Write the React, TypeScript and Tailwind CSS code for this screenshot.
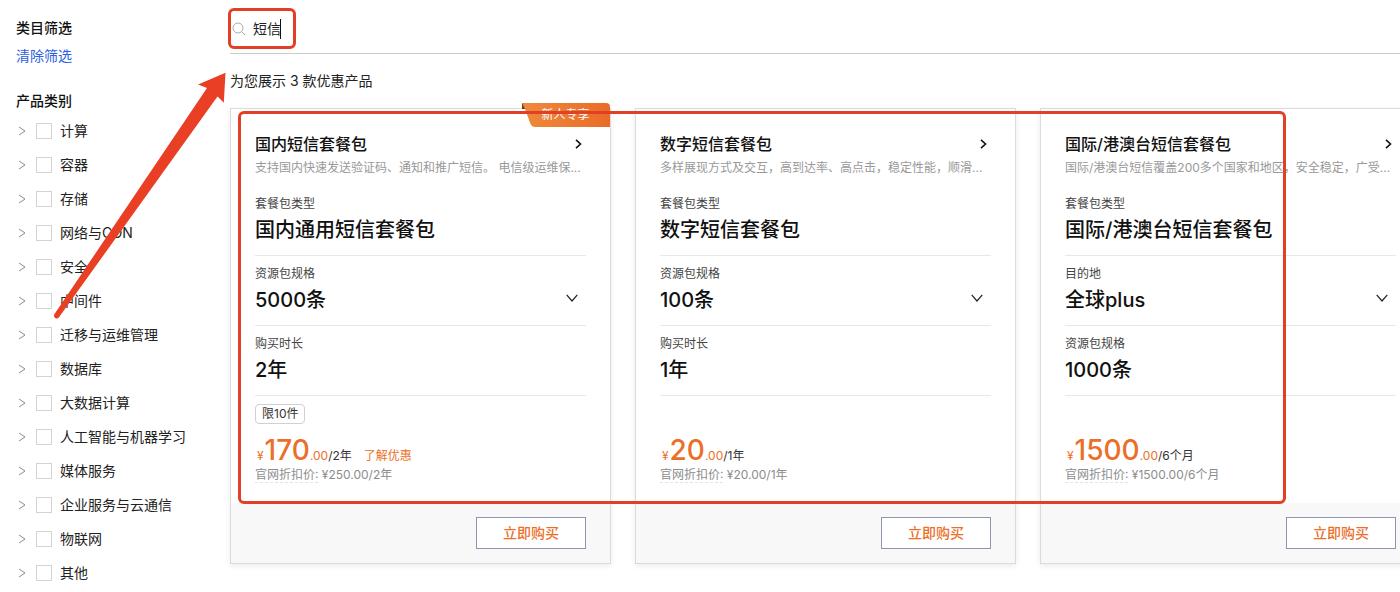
import { useState } from "react";

const categories = [
  "计算",
  "容器",
  "存储",
  "网络与CDN",
  "安全",
  "中间件",
  "迁移与运维管理",
  "数据库",
  "大数据计算",
  "人工智能与机器学习",
  "媒体服务",
  "企业服务与云通信",
  "物联网",
  "其他",
];

type Field = { label: string; value: string; options?: string[] };

type Product = {
  title: string;
  desc: string;
  ribbon?: string;
  fields: Field[];
  limit?: string;
  price: string;
  unit: string;
  more?: string;
  official: string;
};

const products: Product[] = [
  {
    title: "国内短信套餐包",
    desc: "支持国内快速发送验证码、通知和推广短信。 电信级运维保...",
    ribbon: "新人专享",
    fields: [
      { label: "套餐包类型", value: "国内通用短信套餐包" },
      { label: "资源包规格", value: "5000条", options: ["5000条"] },
      { label: "购买时长", value: "2年" },
    ],
    limit: "限10件",
    price: "170",
    unit: "/2年",
    more: "了解优惠",
    official: "¥250.00/2年",
  },
  {
    title: "数字短信套餐包",
    desc: "多样展现方式及交互，高到达率、高点击，稳定性能，顺滑...",
    fields: [
      { label: "套餐包类型", value: "数字短信套餐包" },
      { label: "资源包规格", value: "100条", options: ["100条"] },
      { label: "购买时长", value: "1年" },
    ],
    price: "20",
    unit: "/1年",
    official: "¥20.00/1年",
  },
  {
    title: "国际/港澳台短信套餐包",
    desc: "国际/港澳台短信覆盖200多个国家和地区，安全稳定，广受...",
    fields: [
      { label: "套餐包类型", value: "国际/港澳台短信套餐包" },
      { label: "目的地", value: "全球plus", options: ["全球plus"] },
      { label: "资源包规格", value: "1000条" },
    ],
    price: "1500",
    unit: "/6个月",
    official: "¥1500.00/6个月",
  },
];

function CategoryRow({ name }: { name: string }) {
  const [checked, setChecked] = useState(false);

  return (
    <li className="flex h-[34px] items-center">
      <button type="button" aria-label={`展开${name}`} className="mr-2 flex w-3 justify-center">
        <svg viewBox="0 0 8 10" className="h-2.5 w-2" fill="none" stroke="#8c8c8c" strokeWidth="1">
          <path d="M1 1l6 4-6 4" />
        </svg>
      </button>
      <label className="flex items-center gap-2 text-sm text-[#222]">
        <input
          type="checkbox"
          checked={checked}
          onChange={(e) => setChecked(e.target.checked)}
          className="h-4 w-4 appearance-none border border-[#d4d4d4] bg-white checked:bg-[#ec6f29]"
        />
        {name}
      </label>
    </li>
  );
}

function FieldRow({ field }: { field: Field }) {
  return (
    <div className="border-b border-[#e8e8e8] pt-2.5 pb-[11px]">
      {field.options ? (
        <label className="block">
          <span className="block text-xs leading-4 text-[#444]">{field.label}</span>
          <span className="relative mt-1 block">
            <select
              defaultValue={field.value}
              className="block h-7 w-full appearance-none bg-transparent text-xl leading-7 font-medium text-[#111] outline-none"
            >
              {field.options.map((o) => (
                <option key={o}>{o}</option>
              ))}
            </select>
            <svg
              viewBox="0 0 12 8"
              className="pointer-events-none absolute top-2 right-2 h-2 w-3"
              fill="none"
              stroke="#222"
              strokeWidth="1.2"
            >
              <path d="M.7 .8L6 7 11.3 .8" />
            </svg>
          </span>
        </label>
      ) : (
        <>
          <p className="text-xs leading-4 text-[#444]">{field.label}</p>
          <p className="mt-1 text-xl leading-7 font-medium text-[#111]">{field.value}</p>
        </>
      )}
    </div>
  );
}

function ProductCard({ product }: { product: Product }) {
  return (
    <article className="relative flex w-[381px] shrink-0 flex-col border border-[#d9dbdc] bg-white shadow-[0_2px_6px_rgba(0,0,0,0.08)]">
      {product.ribbon && (
        <div className="absolute -top-1.5 right-0 h-6 w-[89px] text-center text-xs leading-6 text-white">
          <svg viewBox="0 0 89 24" className="absolute inset-0 h-full w-full">
            <defs>
              <linearGradient id="ribbon" x1="0" y1="0" x2="1" y2="0">
                <stop offset="0" stopColor="#ee8a3c" />
                <stop offset="1" stopColor="#ea6b28" />
              </linearGradient>
            </defs>
            <path d="M1 0h3v6H1z" fill="#6b3a12" />
            <path d="M1 0h84q4 0 4 4v20H14q-3 0-4.500-3L4 6z" fill="url(#ribbon)" />
          </svg>
          <span className="relative">{product.ribbon}</span>
        </div>
      )}

      <div className="px-6 pt-6 pb-[17px]">
        <a href="#" className="flex items-center justify-between pr-1">
          <h2 className="text-base leading-[22px] font-medium text-[#111]">{product.title}</h2>
          <svg viewBox="0 0 7 10" className="h-2.5 w-[7px]" fill="none" stroke="#111" strokeWidth="1.6">
            <path d="M1 .8L5.500 5 1 9.200" />
          </svg>
        </a>
        <p className="mt-[3px] mb-2 text-xs leading-5 whitespace-nowrap text-[#999]">{product.desc}</p>

        {product.fields.map((f) => (
          <FieldRow key={f.label} field={f} />
        ))}

        <div className="flex h-7 items-end">
          {product.limit && (
            <span className="flex h-5 items-center rounded border border-[#d0d0d0] px-1.5 text-xs text-[#333]">
              {product.limit}
            </span>
          )}
        </div>
        <div className="mt-3 flex h-7 items-baseline text-xs text-[#ec6f29]">
          <span className="mr-px pl-0.5">¥</span>
          <span className="text-[28px] leading-7 font-medium">{product.price}</span>
          <span>.00</span>
          <span className="text-[#333]">{product.unit}</span>
          {product.more && (
            <a href="#" className="ml-3">
              {product.more}
            </a>
          )}
        </div>
        <p className="text-xs leading-[22px] text-[#8c8c8c]">
          <span className="border-b border-dashed border-[#e4e4e4]">官网折扣价:</span> {product.official}
        </p>
      </div>

      <div className="flex justify-end bg-[#f8f8f8] px-6 py-3.5">
        <button
          type="button"
          className="h-8 w-[110px] border border-[#8e95b3] bg-white text-sm font-medium text-[#ec6f29]"
        >
          立即购买
        </button>
      </div>
    </article>
  );
}

export default function App() {
  const [keyword, setKeyword] = useState("短信");

  return (
    <div
      lang="zh-CN"
      className="relative flex min-h-screen overflow-hidden bg-white font-['Inter','Noto_Sans_CJK_SC',sans-serif] text-[#222]"
    >
      <aside className="w-[230px] shrink-0 pt-[18px] pl-4">
        <h3 className="text-sm leading-5 font-medium text-[#111]">类目筛选</h3>
        <a href="#" className="mt-2 block text-sm leading-5 text-[#2b62e0]">
          清除筛选
        </a>
        <h3 className="mt-[25px] text-sm leading-5 font-medium text-[#111]">产品类别</h3>
        <ul className="mt-[3px]">
          {categories.map((c) => (
            <CategoryRow key={c} name={c} />
          ))}
        </ul>
      </aside>

      <main className="min-w-0 flex-1">
        <div className="relative flex h-[54px] items-center border-b border-[#ccc] pt-1 pl-0.5">
          <svg viewBox="0 0 14 14" className="mr-[7px] h-3.5 w-3.5" fill="none" stroke="#aaa" strokeWidth="1">
            <circle cx="6" cy="6" r="5" />
            <path d="M9.600 9.600L13 13" />
          </svg>
          <input
            type="text"
            aria-label="搜索产品"
            value={keyword}
            onChange={(e) => setKeyword(e.target.value)}
            className="field-sizing-content bg-transparent text-sm outline-none"
          />
          <span className="-ml-px h-5 w-px bg-[#111]" />
          <div className="pointer-events-none absolute top-2 -left-0.5 h-[41px] w-[68px] rounded-md border-3 border-[#e23f26]" />
        </div>

        <p className="mt-[17px] text-sm leading-5">为您展示 3 款优惠产品</p>

        <div className="relative mt-[17px] flex gap-6">
          {products.map((p) => (
            <ProductCard key={p.title} product={p} />
          ))}
          <div className="pointer-events-none absolute top-[3px] left-2 h-[393px] w-[1048px] rounded-md border-3 border-[#e23f26]" />
        </div>
      </main>

      <svg viewBox="0 0 180 250" className="pointer-events-none absolute top-[70px] left-[50px] h-[250px] w-[180px]">
        <path
          d="M175.500 2.700L148 14.500l9 3.500L4.200 244.500a2.800 2.800 0 0 0 4.600 3L167.500 26.500l6.300 6.200z"
          fill="#e94025"
        />
      </svg>
    </div>
  );
}
